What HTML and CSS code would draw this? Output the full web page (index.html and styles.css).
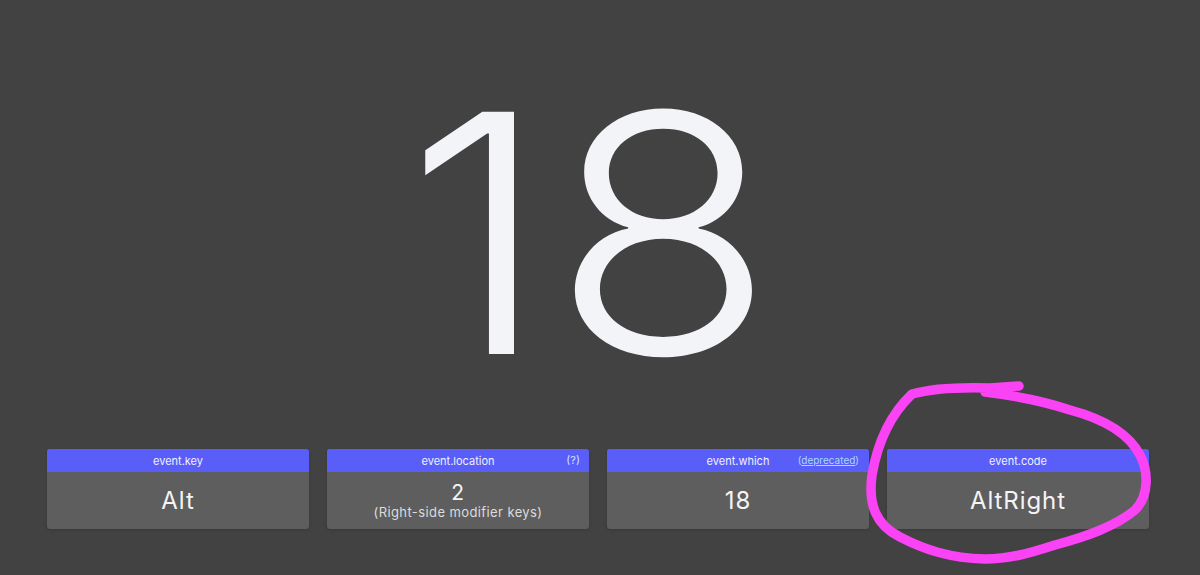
FILE: index.html
```html
<!DOCTYPE html>
<html lang="en">
<head>
<meta charset="utf-8">
<title>Keycode</title>
<link rel="stylesheet" href="styles.css">
</head>
<body>
<main class="page">
  <div class="keycode">18</div>
  <section class="cards">
    <div class="card">
      <div class="card-head"><span class="card-title">event.key</span></div>
      <div class="card-body"><span class="card-value">Alt</span></div>
    </div>
    <div class="card">
      <div class="card-head"><span class="card-title">event.location</span><a class="card-aside">(?)</a></div>
      <div class="card-body"><span class="card-value small">2</span><span class="card-sub">(Right-side modifier keys)</span></div>
    </div>
    <div class="card">
      <div class="card-head"><span class="card-title">event.which</span><a class="card-aside link">(<u>deprecated</u>)</a></div>
      <div class="card-body"><span class="card-value">18</span></div>
    </div>
    <div class="card">
      <div class="card-head"><span class="card-title">event.code</span></div>
      <div class="card-body"><span class="card-value">AltRight</span></div>
    </div>
  </section>
</main>
<svg class="markup" width="1200" height="575" viewBox="0 0 1200 575" aria-hidden="true">
  <path d="M1019,386 L990,388 C960,387 930,389 912,394 C893,412 878,440 872,475 C868,505 876,525 900,537 C925,550 950,558 985,559 C1010,559 1030,553 1055,545 C1085,537 1115,527 1135,510 C1150,495 1148,470 1140,455 C1128,432 1100,418 1070,410 C1040,400 1010,395 985,392" fill="none" stroke="#fb43f6" stroke-width="9.5" stroke-linecap="round" stroke-linejoin="round"/>
</svg>
</body>
</html>
```

FILE: styles.css
```css
html, body {
  margin: 0;
  padding: 0;
  background: #424242;
  overflow: hidden;
}

body {
  width: 1200px;
  height: 575px;
  position: relative;
  font-family: Inter, "Noto Sans", sans-serif;
  color: #f2f2f2;
}

.page {
  display: flex;
  flex-direction: column;
  align-items: center;
}

.keycode {
  padding-top: 66px;
  font-size: 333px;
  font-weight: 300;
  line-height: 333px;
  height: 333px;
  color: #f3f4f7;
  letter-spacing: 2px;
  transform: translateX(-9px) scaleX(1.1);
}

.cards {
  margin-top: 50px;
  align-self: flex-start;
  margin-left: 47px;
  display: flex;
  gap: 18px;
}

.card {
  width: 262px;
  border-radius: 3px;
  overflow: hidden;
  background: #5e5e5e;
  box-shadow: 0 1px 3px rgba(0,0,0,0.15);
}

.card-head {
  height: 23px;
  background: #5a5ef8;
  display: flex;
  align-items: center;
  justify-content: center;
  position: relative;
  font-size: 11px;
  color: #f0f0ff;
}

.card-aside {
  position: absolute;
  right: 9px;
  top: 0;
  line-height: 23px;
  font-size: 11px;
  color: #cfe3ff;
}

.card-aside.link {
  font-size: 10px;
  right: 10px;
  color: #a9d7ff;
}

.card-body {
  height: 57px;
  display: flex;
  flex-direction: column;
  align-items: center;
  justify-content: center;
}

.card-value {
  font-size: 24px;
  line-height: 28px;
  font-weight: 400;
  letter-spacing: 0.9px;
  color: #f4f4f4;
}

.card-value.small {
  font-size: 21px;
  line-height: 22px;
}

.card-sub {
  font-size: 13px;
  line-height: 16px;
  letter-spacing: 0.4px;
  color: #dcdcdc;
}

.markup {
  position: absolute;
  left: 0;
  top: 0;
  pointer-events: none;
}
```
